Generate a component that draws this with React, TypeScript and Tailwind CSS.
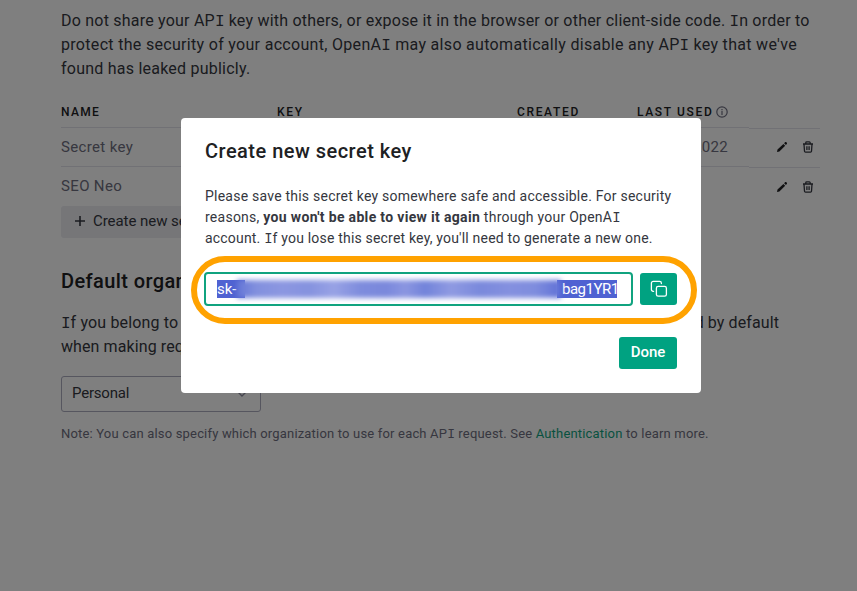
import type { ReactNode } from "react";

// Capital I with slab serifs, as in the brand typeface.
function SlabI() {
  return <span className="font-['Liberation_Mono',monospace] leading-none tracking-normal">I</span>;
}

function Line({ className = "", children }: { className?: string; children: ReactNode }) {
  return <span className={`block whitespace-nowrap ${className}`}>{children}</span>;
}

function InfoIcon() {
  return (
    <svg width="12" height="12" viewBox="0 0 12 12" fill="none" stroke="#6e6e80" strokeWidth="1.2">
      <circle cx="6" cy="6" r="5.2" />
      <path d="M6 5v4M6 3v1.2" />
    </svg>
  );
}

function PencilIcon() {
  return (
    <svg width="12" height="12" viewBox="0 0 12 12" fill="#202123">
      <path d="M1 11l.5-2.4L7.4 2.9l1.8 1.8L3.4 10.5zM8.1 2.2l.9-.9c.4-.4 1-.4 1.4 0l.4.4c.4.4.4 1 0 1.4l-.9.9z" />
    </svg>
  );
}

function TrashIcon() {
  return (
    <svg width="12" height="12" viewBox="0 0 12 12" fill="none" stroke="#353740" strokeWidth="1.3">
      <path d="M1 3h10M3.8 3V1.7a.9.9 0 0 1 .9-.9h2.6a.9.9 0 0 1 .9.9V3M2 3.2l.5 7a1 1 0 0 0 1 .9h5a1 1 0 0 0 1-.9l.5-7M4.9 5.2v3.7M7.1 5.2v3.7" />
    </svg>
  );
}

function CopyIcon() {
  return (
    <svg width="18" height="18" viewBox="0 0 18 18" fill="none" stroke="#fff" strokeWidth="1.3" strokeLinecap="round" strokeLinejoin="round">
      <rect x="6.4" y="6.4" width="10" height="9.8" rx="1.8" />
      <path d="M3.6 11.3h-.4a1.8 1.8 0 0 1-1.8-1.8V3.2a1.8 1.8 0 0 1 1.8-1.8h6.4a1.8 1.8 0 0 1 1.8 1.8v.4" />
    </svg>
  );
}

function KeyRow({ name, used, divider }: { name: string; used: string; divider: boolean }) {
  const line = divider ? "border-b border-[#e3e3ea]" : "";
  return (
    <div className="flex h-[39px] text-[15px] text-[#6e6e80]">
      <div className={`flex w-[688px] items-center ${line}`}>
        <span className="w-[216px] tracking-[0.35px]">{name}</span>
        <span className="w-[360px]" />
        <span className="w-[112px] pl-[56px] tracking-[0.3px]">{used}</span>
      </div>
      <div className={`flex h-10 w-[71px] items-center gap-[14px] pb-px pl-[27px] ${line}`}>
        <PencilIcon />
        <TrashIcon />
      </div>
    </div>
  );
}

function KeysPage() {
  return (
    <main className="flex w-[822px] flex-col pt-[9px] pl-[61px] text-base text-[#353740]">
      <p className="leading-6">
        <Line className="h-6 tracking-[0.215px]">
          Do not share your AP<SlabI /> key with others, or expose it in the browser or other client-side code. <SlabI />n order to
        </Line>
        <Line className="h-6 tracking-[0.31px]">
          protect the security of your account, OpenA<SlabI /> may also automatically disable any AP<SlabI /> key that we've
        </Line>
        <Line className="h-6 tracking-[0.23px]">found has leaked publicly.</Line>
      </p>

      <section className="mt-[23px] w-[760px]">
        <div className="flex h-6 text-xs font-medium tracking-[1.65px] text-[#202123]">
          <div className="flex w-[688px] border-b border-[#e3e3ea]">
            <span className="w-[216px] tracking-[1.3px]">NAME</span>
            <span className="w-60">KEY</span>
            <span className="w-[120px]">CREATED</span>
            <span className="flex h-4 items-center gap-[3px] whitespace-nowrap">
              LAST USED
              <InfoIcon />
            </span>
          </div>
          <div className="h-[25px] w-[71px] border-b border-[#e3e3ea]" />
        </div>
        <KeyRow name="Secret key" used="2022" divider />
        <KeyRow name="SEO Neo" used="" divider={false} />
        <button className="flex h-8 w-[194px] items-center gap-2 rounded-[3px] bg-[#ececf1] pb-[2px] pl-[14px] text-[15px] tracking-[-0.05px] whitespace-nowrap text-[#353740]">
          <svg width="10" height="10" viewBox="0 0 10 10" stroke="#353740" strokeWidth="1.6">
            <path d="M5 0v10M0 5h10" />
          </svg>
          Create new secret key
        </button>
      </section>

      <h2 className="mt-[31px] text-xl leading-6 font-medium tracking-[0.4px] text-[#202123]">Default organization</h2>
      <div className="mt-[18px] flex w-[760px] justify-between leading-6">
        <p>
          <Line className="h-6 tracking-[0.16px]">
            <SlabI />f you belong to
          </Line>
          <Line className="h-6 tracking-[0.1px]">when making requests</Line>
        </p>
        <p className="mr-[42px] whitespace-nowrap tracking-[0.1px]">used by default</p>
      </div>
      <div className="mt-[17px] flex h-9 w-[200px] items-center justify-between rounded-[3px] border border-[#acacbe] pr-3 pb-[2px] pl-[10px] text-[15px]">
        <span className="tracking-[-0.2px]">Personal</span>
        <svg width="12" height="12" viewBox="0 0 12 12" fill="none" stroke="#8e8ea0" strokeWidth="1.4">
          <path d="M2.5 5.5L6 9l3.5-3.5" />
        </svg>
      </div>
      <p className="mt-[13px] text-[13px] leading-[18px] tracking-[0.18px] whitespace-nowrap text-[#6e6e80]">
        Note: You can also specify which organization to use for each AP<SlabI /> request. See{" "}
        <span className="text-[#10a37f]">Authentication</span> to learn more.
      </p>
    </main>
  );
}

function SecretField() {
  return (
    <div className="flex h-[34px] w-[429px] items-center rounded-[4px] border-2 border-[#10a37f] pl-[11px]">
      <div className="relative flex h-[18px] w-[400px] items-center justify-between text-[15px] leading-[18px] text-white">
        <span className="w-7 bg-[#4f62d2]">sk-</span>
        <span className="w-[60px] bg-[#4f62d2] pl-[5px] tracking-[-0.5px]">bag1YR1</span>
        <div className="absolute top-0 left-[20px] h-[18px] w-[324px] bg-[linear-gradient(90deg,#6476d6_0%,#8290de_6%,#8c97e1_14%,#8592df_22%,#98a2e5_30%,#7e8cdd_38%,#7a88dc_46%,#8b96e1_52%,#7283da_58%,#8f9ae2_66%,#7a89dc_75%,#8490df_84%,#7f8dde_92%,#6071d6_100%)] blur-[2.5px]" />
      </div>
    </div>
  );
}

function SecretDialog() {
  return (
    <div className="fixed inset-0 bg-black/50 pt-[118px] pl-[181px]">
      <div role="dialog" className="relative flex h-[275px] w-[520px] flex-col rounded-[4px] bg-white px-6 pt-[21px] pb-6">
        <h1 className="text-xl leading-6 font-medium tracking-[0.48px] text-[#202123]">Create new secret key</h1>
        <p className="mt-[23px] text-sm leading-[21px] text-[#353740]">
          <Line className="h-[21px] tracking-[0.23px]">Please save this secret key somewhere safe and accessible. For security</Line>
          <Line className="h-[21px] tracking-[0.25px]">
            reasons, <b className="font-bold tracking-[0.33px]">you won't be able to view it again</b> through your OpenA<SlabI />
          </Line>
          <Line className="h-[21px] tracking-[0.19px]">
            account. <SlabI />f you lose this secret key, you'll need to generate a new one.
          </Line>
        </p>
        <div className="mt-[23px] -ml-px flex items-center gap-[7px]">
          <SecretField />
          <button className="flex h-8 w-[37px] items-center justify-center rounded-[3px] bg-[#00a281]">
            <CopyIcon />
          </button>
        </div>
        <button className="mt-[31px] h-8 w-[58px] self-end rounded-[3px] bg-[#00a281] pb-[2px] text-[15px] font-medium text-white">Done</button>
        <div className="absolute top-[138px] left-[10px] h-[68px] w-[506px] rounded-[34px] border-[6px] border-[#ffa200]" />
      </div>
    </div>
  );
}

export default function App() {
  return (
    <div className="h-[591px] w-[857px] overflow-hidden bg-white font-[Roboto,sans-serif]">
      <KeysPage />
      <SecretDialog />
    </div>
  );
}
